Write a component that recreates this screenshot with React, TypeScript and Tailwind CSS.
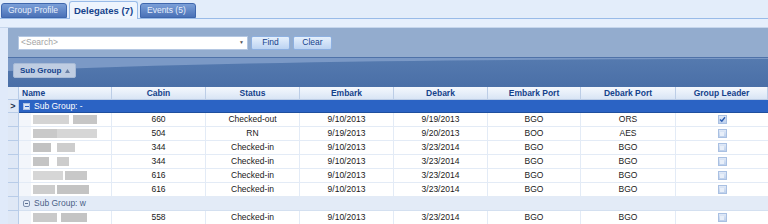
import React from 'react';

type Row = {
    cabin: string;
    status: string;
    embark: string;
    debark: string;
    embarkPort: string;
    debarkPort: string;
    leader: boolean;
    blocks: [number, number, string][];
};

const groupA: Row[] = [
    { cabin: '660', status: 'Checked-out', embark: '9/10/2013', debark: '9/19/2013', embarkPort: 'BGO', debarkPort: 'ORS', leader: true, blocks: [[0, 36, '#d4d4d4'], [40, 24, '#c6c6c6']] },
    { cabin: '504', status: 'RN', embark: '9/19/2013', debark: '9/20/2013', embarkPort: 'BOO', debarkPort: 'AES', leader: false, blocks: [[0, 24, '#c9c9c9'], [24, 40, '#d6d6d6']] },
    { cabin: '344', status: 'Checked-in', embark: '9/10/2013', debark: '3/23/2014', embarkPort: 'BGO', debarkPort: 'BGO', leader: false, blocks: [[0, 18, '#c2c2c2'], [24, 18, '#cdcdcd']] },
    { cabin: '344', status: 'Checked-in', embark: '9/10/2013', debark: '3/23/2014', embarkPort: 'BGO', debarkPort: 'BGO', leader: false, blocks: [[0, 16, '#c4c4c4'], [24, 12, '#cccccc']] },
    { cabin: '616', status: 'Checked-in', embark: '9/10/2013', debark: '3/23/2014', embarkPort: 'BGO', debarkPort: 'BGO', leader: false, blocks: [[0, 30, '#d6d6d6'], [32, 22, '#c8c8c8']] },
    { cabin: '616', status: 'Checked-in', embark: '9/10/2013', debark: '3/23/2014', embarkPort: 'BGO', debarkPort: 'BGO', leader: false, blocks: [[0, 22, '#cdcdcd'], [24, 32, '#c3c3c3']] },
];

const groupB: Row[] = [
    { cabin: '558', status: 'Checked-in', embark: '9/10/2013', debark: '3/23/2014', embarkPort: 'BGO', debarkPort: 'BGO', leader: false, blocks: [[0, 24, '#cacaca'], [28, 26, '#c4c4c4']] },
];

const cols = 'grid grid-cols-[11px_93px_94px_94px_94px_94px_93px_95px_92px]';

const Checkbox = ({ checked }: { checked: boolean }) => (
    <div className="w-[9px] h-[9px] border border-[#a9c0e2] bg-gradient-to-b from-[#e0e9f7] to-[#bdd0ec] flex items-center justify-center">
        {checked ? (
            <svg width="7" height="7" viewBox="0 0 7 7">
                <path d="M1 3.5 L2.8 5.3 L6 1.2" stroke="#2d5fb3" strokeWidth="1.4" fill="none" />
            </svg>
        ) : (
            <div className="w-[4px] h-[4px] bg-[#e8eff9]" />
        )}
    </div>
);

const DataRow = ({ row }: { row: Row }) => (
    <div className={`${cols} h-[14px] bg-white text-[#1a1a1a]`}>
        <div className="bg-[#dfe8f6] border-r border-b border-[#b8cce8]" />
        <div className="flex border-r border-b border-[#e3ebf6]">
            <div className="w-[12px] bg-[#f3f6fb]" />
            <div className="relative flex-1 ml-[2px] my-[2px]">
                {row.blocks.map(([left, width, color], i) => (
                    <div
                        key={i}
                        className="absolute top-0 bottom-0"
                        style={{ left, width, background: color }}
                    />
                ))}
            </div>
        </div>
        {[row.cabin, row.status, row.embark, row.debark, row.embarkPort, row.debarkPort].map((v, i) => (
            <div key={i} className="flex items-center justify-center border-r border-b border-[#e3ebf6] leading-none whitespace-nowrap">
                {v}
            </div>
        ))}
        <div className="flex items-center justify-center border-b border-[#e3ebf6]">
            <Checkbox checked={row.leader} />
        </div>
    </div>
);

export default function App() {
    const headers = ['Cabin', 'Status', 'Embark', 'Debark', 'Embark Port', 'Debark Port', 'Group Leader'];

    return (
        <div className="w-[768px] h-[224px] overflow-hidden bg-[#dfe8f6] font-['Liberation_Sans',Arial,sans-serif] text-[8.5px] whitespace-nowrap">
            {/* Tabs */}
            <div className="h-[19px] flex items-end gap-[2px] pl-[1px] border-b border-[#99bbe8] bg-[#e3edfa]">
                <div className="h-[15px] w-[66px] rounded-t-[3px] bg-gradient-to-b from-[#7b9fd8] to-[#4b72b7] border border-[#3f67ad] text-[#e6eefb] flex items-center pl-[6px] leading-none">
                    Group Profile
                </div>
                <div className="h-[18px] w-[69px] rounded-t-[3px] bg-[#eef4fd] border border-b-0 border-[#99bbe8] text-[#15428b] font-bold text-[9.5px] flex items-center justify-center leading-none -mb-px">
                    Delegates (7)
                </div>
                <div className="h-[15px] w-[56px] rounded-t-[3px] bg-gradient-to-b from-[#7b9fd8] to-[#4b72b7] border border-[#3f67ad] text-[#e6eefb] flex items-center pl-[6px] leading-none">
                    Events (5)
                </div>
            </div>
            <div className="h-[9px] bg-[#e6effc] border-b border-[#c6d6ec]" />

            <div className="flex">
                <div className="w-[8px] bg-[#e0eafa]" />
                <div className="w-[760px]">
                    {/* Search bar */}
                    <div className="h-[30px] bg-[#93acce] flex items-center pl-[10px] gap-[3px] border-b border-[#4f72a8]">
                        <div className="w-[230px] h-[14px] bg-white border border-[#b4c7e2] flex items-center justify-between pl-[2px] pr-[3px] text-[#a4a4a4] leading-none">
                            <span>&lt;Search&gt;</span>
                            <span className="text-[5px] text-[#555]">▼</span>
                        </div>
                        <button className="w-[39px] h-[14px] rounded-[2px] border border-[#8eb0e0] bg-gradient-to-b from-[#e6f0fc] to-[#bcd3f2] text-[#15428b] leading-none">
                            Find
                        </button>
                        <button className="w-[39px] h-[14px] rounded-[2px] border border-[#8eb0e0] bg-gradient-to-b from-[#e6f0fc] to-[#bcd3f2] text-[#15428b] leading-none">
                            Clear
                        </button>
                    </div>

                    {/* Group by band */}
                    <div className="relative h-[29px] bg-gradient-to-b from-[#557aaf] to-[#4a6fa7] overflow-hidden">
                        <svg className="absolute inset-0" width="760" height="29" viewBox="0 0 760 29" preserveAspectRatio="none">
                            <path d="M0 0 H760 V1 C520 1 220 3 0 13 Z" fill="#7b99c6" />
                        </svg>
                        <div className="relative ml-[5px] mt-[5px] w-[63px] h-[15px] rounded-[2px] bg-[#bfcde2] border border-[#a7bad6] flex items-center justify-between pl-[6px] pr-[5px] text-[#15428b] font-bold text-[8px] leading-none">
                            <span>Sub Group</span>
                            <svg width="5" height="4" viewBox="0 0 5 4">
                                <path d="M2.5 0 L5 4 H0 Z" fill="#6a7fa3" />
                            </svg>
                        </div>
                    </div>

                    {/* Header */}
                    <div className={`${cols} h-[13px] text-[#15428b] font-bold leading-none`}>
                        <div className="bg-[#e2ebf8] border-r border-b border-[#b8cce8]" />
                        <div className="flex items-center pl-[3px] bg-gradient-to-b from-[#f5f8fd] to-[#d9e5f5] border-r border-b border-[#bccde6]">Name</div>
                        {headers.map((h) => (
                            <div key={h} className="flex items-center justify-center bg-gradient-to-b from-[#f5f8fd] to-[#d9e5f5] border-r border-b border-[#bccde6]">
                                {h}
                            </div>
                        ))}
                    </div>

                    {/* Group A */}
                    <div className="flex h-[13px]">
                        <div className="w-[11px] bg-[#dfe8f6] border-r border-b border-[#b8cce8] flex items-center justify-center text-[#1d2f4d] font-bold text-[9px] leading-none">
                            &gt;
                        </div>
                        <div className="flex-1 bg-[#2b63c4] flex items-center pl-[4px] gap-[4px] text-white leading-none border-b border-[#1f4f9e]">
                            <div className="w-[7px] h-[7px] bg-[#dbe6f7] border border-[#aac0e4] flex items-center justify-center">
                                <div className="w-[4px] h-px bg-[#2b63c4]" />
                            </div>
                            <span>Sub Group: -</span>
                        </div>
                    </div>
                    {groupA.map((r, i) => (
                        <DataRow key={i} row={r} />
                    ))}

                    {/* Group B */}
                    <div className="flex h-[14px]">
                        <div className="w-[11px] bg-[#dfe8f6] border-r border-b border-[#b8cce8]" />
                        <div className="flex-1 bg-[#e3ebf7] flex items-center pl-[4px] gap-[4px] text-[#4a5f86] leading-none border-b border-[#d4e0f0]">
                            <div className="w-[7px] h-[7px] rounded-[2px] border border-[#7d8fae] flex items-center justify-center">
                                <div className="w-[3px] h-px bg-[#5a6d8f]" />
                            </div>
                            <span>Sub Group: w</span>
                        </div>
                    </div>
                    {groupB.map((r, i) => (
                        <DataRow key={i} row={r} />
                    ))}
                </div>
            </div>
        </div>
    );
}
